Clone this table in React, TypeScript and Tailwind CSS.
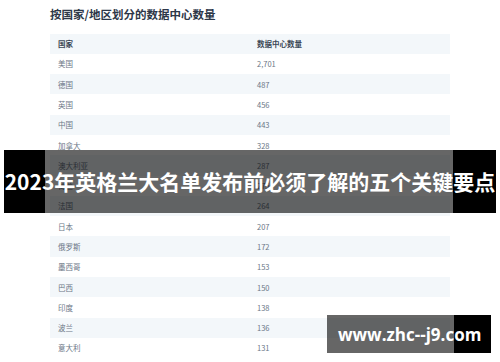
const rows: [string, string][] = [
  ['美国', '2,701'],
  ['德国', '487'],
  ['英国', '456'],
  ['中国', '443'],
  ['加拿大', '328'],
  ['澳大利亚', '287'],
  ['荷兰', '275'],
  ['法国', '264'],
  ['日本', '207'],
  ['俄罗斯', '172'],
  ['墨西哥', '153'],
  ['巴西', '150'],
  ['印度', '138'],
  ['波兰', '136'],
  ['意大利', '131'],
];

const font = { fontFamily: '"Noto Sans CJK SC", "Noto Sans", sans-serif' };

export default function App() {
  return (
    <div className="relative h-[362px] w-[500px] overflow-hidden bg-white" style={font}>
      <div className="px-[50px] pt-[6px]">
        <h1 className="text-[11.5px] font-bold leading-[16px] text-[#2d3748]">按国家/地区划分的数据中心数量</h1>
        <table className="mt-[11.5px] w-[400px] table-fixed border-collapse">
          <thead>
            <tr className="h-[20.3px] bg-[#f3f7fa]">
              <th className="w-[200px] pl-[8px] text-left text-[7.5px] font-bold text-[#3b4756]">国家</th>
              <th className="w-[200px] pl-[7px] text-left text-[7.5px] font-bold text-[#3b4756]">数据中心数量</th>
            </tr>
          </thead>
          <tbody>
            {rows.map(([country, count], i) => (
              <tr key={country} className={i % 2 === 1 ? 'h-[20.3px] bg-[#f3f7fa]' : 'h-[20.3px] bg-white'}>
                <td className="pl-[8px] text-[7.5px] text-[#6b7686]">{country}</td>
                <td className="pl-[7px] text-[7.5px] text-[#6b7686]">{count}</td>
              </tr>
            ))}
          </tbody>
        </table>
      </div>

      {/* caption banner over the screenshot: solid sides, see-through middle */}
      <div className="absolute left-[4px] top-[150px] flex h-[63px] w-[492px]">
        <div className="w-[41px] bg-black" />
        <div className="w-[408px] bg-black/60" />
        <div className="flex-1 bg-black" />
        <div className="absolute inset-0 flex items-center justify-center whitespace-nowrap text-[21px] font-bold leading-none text-white">
          2023年英格兰大名单发布前必须了解的五个关键要点
        </div>
      </div>

      {/* watermark */}
      <div className="absolute left-[327px] top-[315px] flex h-[38px] w-[164px]">
        <div className="w-[127px] bg-black/60" />
        <div className="flex-1 bg-black" />
        <div
          className="absolute inset-0 flex items-center whitespace-nowrap pl-[11px] text-[17px] font-bold leading-none text-white"
          style={{ fontFamily: '"Open Sans", sans-serif' }}
        >
          www.zhc--j9.com
        </div>
      </div>
    </div>
  );
}
